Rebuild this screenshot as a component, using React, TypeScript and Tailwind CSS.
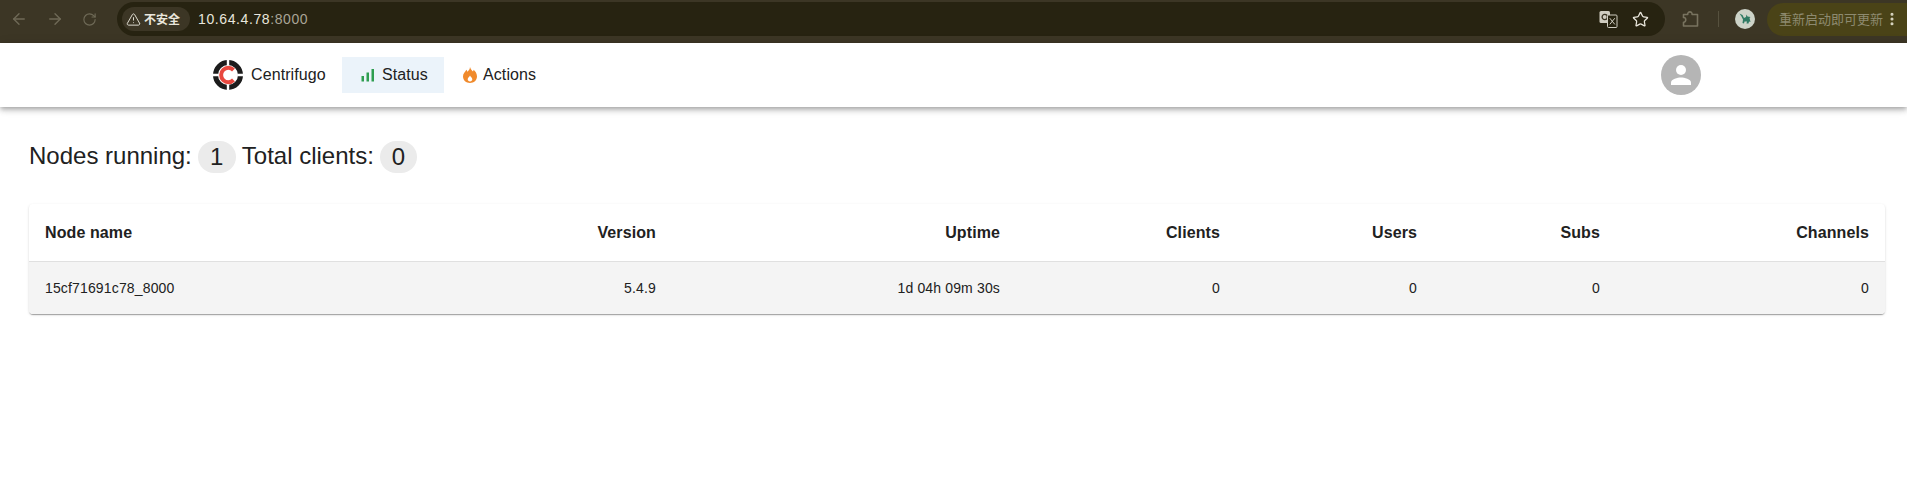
import React from "react";
import { ArrowLeft, ArrowRight, RotateCw, TriangleAlert, Star, EllipsisVertical } from "lucide-react";

const headers = ["Version", "Uptime", "Clients", "Users", "Subs", "Channels"];
const row = ["5.4.9", "1d 04h 09m 30s", "0", "0", "0", "0"];

function Logo() {
  return (
    <svg width="30" height="30" viewBox="0 0 30 30" fill="none">
      <circle cx="15" cy="15" r="12.5" stroke="#1c1c1c" strokeWidth="5" />
      <path d="M20.500 10 A7.200 7.200 0 1 0 20.500 20" stroke="#e8483f" strokeWidth="4" />
      <path d="M15 0v5.500M15 24.500V30M0 15h5.500M24.500 15H30" stroke="#fff" strokeWidth="2.400" />
    </svg>
  );
}

function Translate() {
  return (
    <svg width="19" height="18" viewBox="0 0 19 18">
      <rect x="0.500" y="1" width="10.500" height="12" rx="1.500" fill="#cfccc0" />
      <circle cx="5.700" cy="7" r="2.600" fill="none" stroke="#3a3423" strokeWidth="1.300" />
      <rect x="8.500" y="5" width="9.500" height="12.500" rx="1" fill="#26220f" stroke="#cfccc0" strokeWidth="1" />
      <path d="M10.800 8.200l5 6.200M15.800 8.200l-5 6.200" stroke="#cfccc0" strokeWidth="1" />
    </svg>
  );
}

function ExtensionPiece() {
  return (
    <svg width="18" height="18" viewBox="0 0 18 18" fill="none" stroke="#78735f" strokeWidth="1.600" strokeLinejoin="round">
      <path d="M1.500 4.500h4.200c-.3-3.500 4.700-3.500 4.400 0h5.400v11.500H1.500v-3.800c3 .5 3-5.200 0-4.700z" />
    </svg>
  );
}

function ProfileDino() {
  return (
    <svg width="20" height="20" viewBox="0 0 20 20">
      <circle cx="10" cy="10" r="10" fill="#cdd3c8" />
      <path fill="#2f7a63" d="M4.500 4.500l3 1.500 1.500 3 2 -1 .5-2.500 1 2 3 .5-1 1 1 4-1.500-.5-.5 2-2 0 .5-2-2.500 0-.5 2-1.500-.5.500-3.500-1.500-3z" />
    </svg>
  );
}

export default function App() {
  return (
    <div className="min-h-[488px] bg-white font-['Liberation_Sans',sans-serif] text-[#212121]">
      <div className="h-[43px] pb-[5px] bg-[#3c3625] flex items-center text-[#e9e6dc]">
        <div className="flex items-center gap-[18px] pl-[10px] w-[117px] text-[#6f6a57]">
          <ArrowLeft size={18} strokeWidth={1.800} />
          <ArrowRight size={18} strokeWidth={1.800} />
          <RotateCw size={15} strokeWidth={1.800} />
        </div>
        <div className="h-[34px] w-[1548px] rounded-full bg-[#272311] flex items-center pl-[5px] pr-[16px]">
          <div className="h-[24px] w-[68px] rounded-full bg-[#3c3625] flex items-center gap-[3px] pl-[4px] text-[12px] font-bold">
            <TriangleAlert size={15} strokeWidth={1.500} />
            <span className="font-['Noto_Sans_CJK_SC',sans-serif]">不安全</span>
          </div>
          <div className="ml-[8px] text-[14px] tracking-[0.6px]">
            10.64.4.78<span className="text-[#a9a596]">:8000</span>
          </div>
          <div className="ml-auto flex items-center gap-[14px]">
            <Translate />
            <Star size={17} strokeWidth={1.800} />
          </div>
        </div>
        <div className="ml-[17px]">
          <ExtensionPiece />
        </div>
        <div className="ml-[18px] h-[16px] w-px bg-[#56513e]" />
        <div className="ml-[16px]">
          <ProfileDino />
        </div>
        <div className="ml-[12px] h-[33px] flex-1 rounded-l-full bg-[#4a4317] flex items-center pl-[12px] text-[#8d8a70] text-[13px] font-['Noto_Sans_CJK_SC',sans-serif]">
          <span className="whitespace-nowrap">重新启动即可更新</span>
          <EllipsisVertical size={16} strokeWidth={2.600} className="text-[#d9d6c2] ml-[1px] shrink-0" />
        </div>
      </div>

      <header className="relative h-[64px] bg-white flex items-center pl-[213px] shadow-[0_2px_4px_-1px_rgba(0,0,0,0.2),0_4px_5px_0_rgba(0,0,0,0.14),0_1px_10px_0_rgba(0,0,0,0.12)] text-[16px] tracking-[0.1px]">
        <Logo />
        <span className="ml-[8px] w-[91px]">Centrifugo</span>
        <div className="h-[36px] w-[102px] bg-[#ebf3fa] flex items-center pl-[19px] gap-[7px]">
          <svg width="14" height="14" viewBox="0 0 14 14" fill="#2e9e50">
            <rect x="0.500" y="8" width="2.500" height="5.500" />
            <rect x="5.500" y="4.500" width="2.500" height="9" />
            <rect x="10.500" y="1" width="2.500" height="12.500" />
          </svg>
          <span>Status</span>
        </div>
        <div className="flex items-center pl-[19px] gap-[6px]">
          <svg width="14" height="16" viewBox="0 0 14 16">
            <path
              fill="#f08a2c"
              d="M7 0c.6 2.400 2 3.400 3 4.600.4-.6.5-1.200.5-1.800C12.400 4.300 14 6.700 14 9.500 14 13.200 10.900 16 7 16S0 13.200 0 9.500C0 6.300 2.300 4.800 3.400 2.800c.5.700.8 1.300.9 2C5.900 3.600 6.900 2 7 0z"
            />
            <path fill="#fff" d="M7 8.500c.5 1.300 2.300 2 2.300 3.800 0 1.300-1 2.200-2.300 2.200s-2.300-.9-2.300-2.200c0-1.800 1.800-2.500 2.300-3.800z" />
          </svg>
          <span>Actions</span>
        </div>
        <div className="absolute left-[1661px] top-[12px] size-[40px] rounded-full bg-[#b5b5b5] flex items-center justify-center">
          <svg width="30" height="30" viewBox="0 0 24 24" fill="#fff">
            <circle cx="12" cy="8" r="4" />
            <path d="M12 14c-2.670 0-8 1.340-8 4v2h16v-2c0-2.660-5.330-4-8-4z" />
          </svg>
        </div>
      </header>

      <main className="px-[29px] pt-[34px]">
        <div className="h-[32px] flex items-center text-[24px] whitespace-nowrap">
          <span className="-translate-y-px">Nodes running:</span>
          <span className="ml-[6px] h-[32px] w-[38px] rounded-full bg-[#ebebeb] flex items-center justify-center">1</span>
          <span className="ml-[6px] -translate-y-px">Total clients:</span>
          <span className="ml-[6px] h-[32px] w-[37px] rounded-full bg-[#ebebeb] flex items-center justify-center">0</span>
        </div>
        <div className="mt-[31px] w-[1856px] rounded-[4px] bg-white overflow-hidden shadow-[0_2px_1px_-1px_rgba(0,0,0,0.2),0_1px_1px_0_rgba(0,0,0,0.14),0_1px_3px_0_rgba(0,0,0,0.12)]">
          <div className="grid grid-cols-[320px_323px_344px_220px_197px_183px_269px] h-[58px] items-center border-b border-[#e0e0e0] text-[16px] font-bold tracking-[0.1px]">
            <div className="px-4">Node name</div>
            {headers.map((t) => (
              <div key={t} className="px-4 text-right">{t}</div>
            ))}
          </div>
          <div className="grid grid-cols-[320px_323px_344px_220px_197px_183px_269px] h-[52px] items-center bg-[#f4f4f4] text-[14px] tracking-[0.15px]">
            <div className="px-4">15cf71691c78_8000</div>
            {row.map((t, i) => (
              <div key={i} className="px-4 text-right">{t}</div>
            ))}
          </div>
        </div>
      </main>
    </div>
  );
}
